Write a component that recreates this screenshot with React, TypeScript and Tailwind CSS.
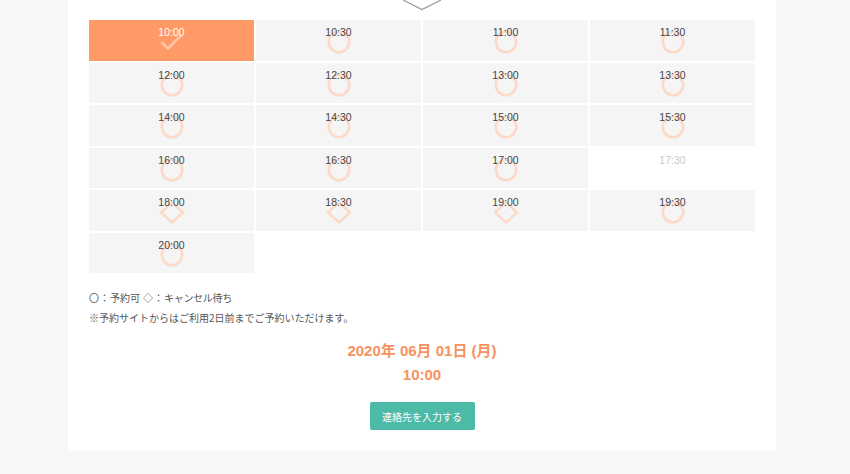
import React from "react";

type Status = "ok" | "wait" | "none" | "selected";

const slots: { t: string; s: Status }[] = [
  { t: "10:00", s: "selected" },
  { t: "10:30", s: "ok" },
  { t: "11:00", s: "ok" },
  { t: "11:30", s: "ok" },
  { t: "12:00", s: "ok" },
  { t: "12:30", s: "ok" },
  { t: "13:00", s: "ok" },
  { t: "13:30", s: "ok" },
  { t: "14:00", s: "ok" },
  { t: "14:30", s: "ok" },
  { t: "15:00", s: "ok" },
  { t: "15:30", s: "ok" },
  { t: "16:00", s: "ok" },
  { t: "16:30", s: "ok" },
  { t: "17:00", s: "ok" },
  { t: "17:30", s: "none" },
  { t: "18:00", s: "wait" },
  { t: "18:30", s: "wait" },
  { t: "19:00", s: "wait" },
  { t: "19:30", s: "ok" },
  { t: "20:00", s: "ok" },
];

function Icon({ s }: { s: Status }) {
  if (s === "none") return null;
  if (s === "ok")
    return (
      <svg width="24" height="24" viewBox="0 0 24 24" className="-mt-[8px] block">
        <circle cx="12" cy="12" r="10.2" fill="none" stroke="#fcdac7" strokeWidth="2.6" />
      </svg>
    );
  if (s === "wait")
    return (
      <svg width="26" height="24" viewBox="0 0 26 24" className="-mt-[8px] block">
        <polygon points="13,2.5 24,12.5 13,22.5 2,12.5" fill="none" stroke="#fcdac7" strokeWidth="2.4" />
      </svg>
    );
  return (
    <svg width="24" height="24" viewBox="0 0 24 24" className="-mt-[7px] block">
      <polyline points="1.5,11 8,17.5 21,4.5" fill="none" stroke="rgba(255,255,255,0.42)" strokeWidth="2.8" />
    </svg>
  );
}

function Cell({ t, s }: { t: string; s: Status }) {
  const bg = s === "selected" ? "bg-[#ff9966]" : s === "none" ? "bg-white" : "bg-[#f5f5f5]";
  const color = s === "selected" ? "text-white" : s === "none" ? "text-[#c8c8c8]" : "text-[#444]";
  return (
    <div className={`h-[40.5px] flex flex-col items-center ${bg}`}>
      <span
        className={`relative z-10 mt-[6px] text-[10.5px] leading-[12px] ${color}`}
        style={{ fontFamily: '"Liberation Sans", Arial, sans-serif' }}
      >
        {t}
      </span>
      <Icon s={s} />
    </div>
  );
}

export default function App() {
  return (
    <div
      className="min-h-[474px] w-[850px] bg-[#f6f7f9]"
      style={{ fontFamily: '"Liberation Sans", Arial, "Noto Sans CJK JP", sans-serif' }}
    >
      <div className="ml-[68px] w-[708px] bg-white px-[21px] pb-[21px]">
        <div className="flex h-[20px] justify-center">
          <svg width="40" height="11" viewBox="0 0 40 11" className="block">
            <polyline points="1,0 20,9.5 39,0" fill="none" stroke="#9a9a9a" strokeWidth="1.2" />
          </svg>
        </div>
        <div className="grid grid-cols-4 gap-[2px]">
          {slots.map((x) => (
            <Cell key={x.t} t={x.t} s={x.s} />
          ))}
        </div>
        <div
          className="mt-[15px] text-[10px] leading-[20px] text-[#555]"
          style={{ fontFamily: '"Noto Sans CJK JP", sans-serif' }}
        >
          <p className="flex items-center">
            <span className="inline-block w-[10px] text-center">〇</span>
            <span className="inline-block w-[11px] overflow-hidden text-center">：</span>
            <span>予約可</span>
            <span className="inline-block w-[3px]"> </span>
            <span className="inline-block w-[10px] text-center">◇</span>
            <span className="inline-block w-[11px] overflow-hidden text-center">：</span>
            <span className="tracking-[-0.3px]">キャンセル待ち</span>
          </p>
          <p>※予約サイトからはご利用2日前までご予約いただけます。</p>
        </div>
        <div className="mt-[11px] flex flex-col items-center text-[15px] font-bold leading-[24px] text-[#f7925f]">
          <p>2020年 06月 01日 (月)</p>
          <p>10:00</p>
        </div>
        <div className="mt-[15px] flex justify-center">
          <button
            className="flex h-[28px] w-[105px] items-center justify-center rounded-[2px] bg-[#4cbaa6] text-[10px] text-white"
            style={{ fontFamily: '"Noto Sans CJK JP", sans-serif' }}
          >
            連絡先を入力する
          </button>
        </div>
      </div>
    </div>
  );
}
